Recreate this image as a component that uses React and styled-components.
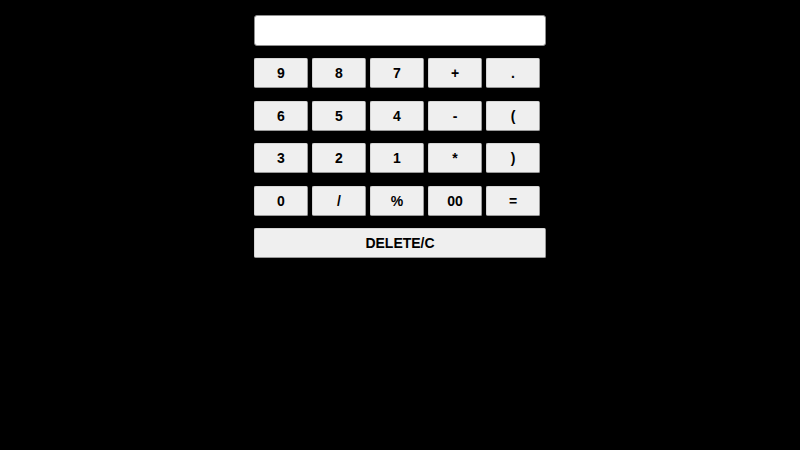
import React, { useState } from 'react';
import styled, { createGlobalStyle } from 'styled-components';

const GlobalStyle = createGlobalStyle`
    html, body {
        margin: 0;
        padding: 0;
        background-color: #000;
        font-family: "Liberation Sans", Arial, sans-serif;
    }
`;

const rows = [
    ['9', '8', '7', '+', '.'],
    ['6', '5', '4', '-', '('],
    ['3', '2', '1', '*', ')'],
    ['0', '/', '%', '00', '='],
];

const App = () => {
    const [value, setValue] = useState('');

    const press = (key) => {
        if (key === '=') {
            try {
                // eslint-disable-next-line no-new-func
                setValue(String(Function('return (' + value + ')')()));
            } catch (e) {
                setValue('Error');
            }
            return;
        }
        setValue(value + key);
    };

    return (
        <Container>
            <GlobalStyle />
            <Calculator>
                <Display value={value} readOnly />
                {rows.map((row, i) => (
                    <KeyRow key={i}>
                        {row.map((key) => (
                            <Key key={key} onClick={() => press(key)}>{key}</Key>
                        ))}
                    </KeyRow>
                ))}
                <Key $wide onClick={() => setValue('')}>DELETE/C</Key>
            </Calculator>
        </Container>
    );
};

const Container = styled.div`
    display: flex;
    flex-direction: row;
    justify-content: center;
    width: 100%;
    height: 450px;
    background-color: #000;
`;

const Calculator = styled.div`
    display: flex;
    flex-direction: column;
    gap: 12.5px;
    width: 292px;
    padding-top: 15px;
`;

const Display = styled.input`
    box-sizing: border-box;
    width: 292px;
    height: 30.5px;
    margin: 0;
    padding: 0 8px;
    background-color: #fff;
    border: 1px solid #8f8f8f;
    border-radius: 3px;
    font-family: "Liberation Sans", Arial, sans-serif;
    font-size: 16px;
    outline: none;
`;

const KeyRow = styled.div`
    display: flex;
    flex-direction: row;
    gap: 4px;
`;

const Key = styled.button`
    box-sizing: border-box;
    width: ${(props) => (props.$wide ? '292px' : '54px')};
    height: 30px;
    margin: 0;
    padding: 0;
    background-color: #efefef;
    border: 1px solid #d6d6d6;
    border-right-color: #9a9a9a;
    border-bottom-color: #9a9a9a;
    border-radius: 2px;
    color: #000;
    font-family: "Liberation Sans", Arial, sans-serif;
    font-size: 14px;
    font-weight: bold;
    cursor: pointer;
`;

export default App;
